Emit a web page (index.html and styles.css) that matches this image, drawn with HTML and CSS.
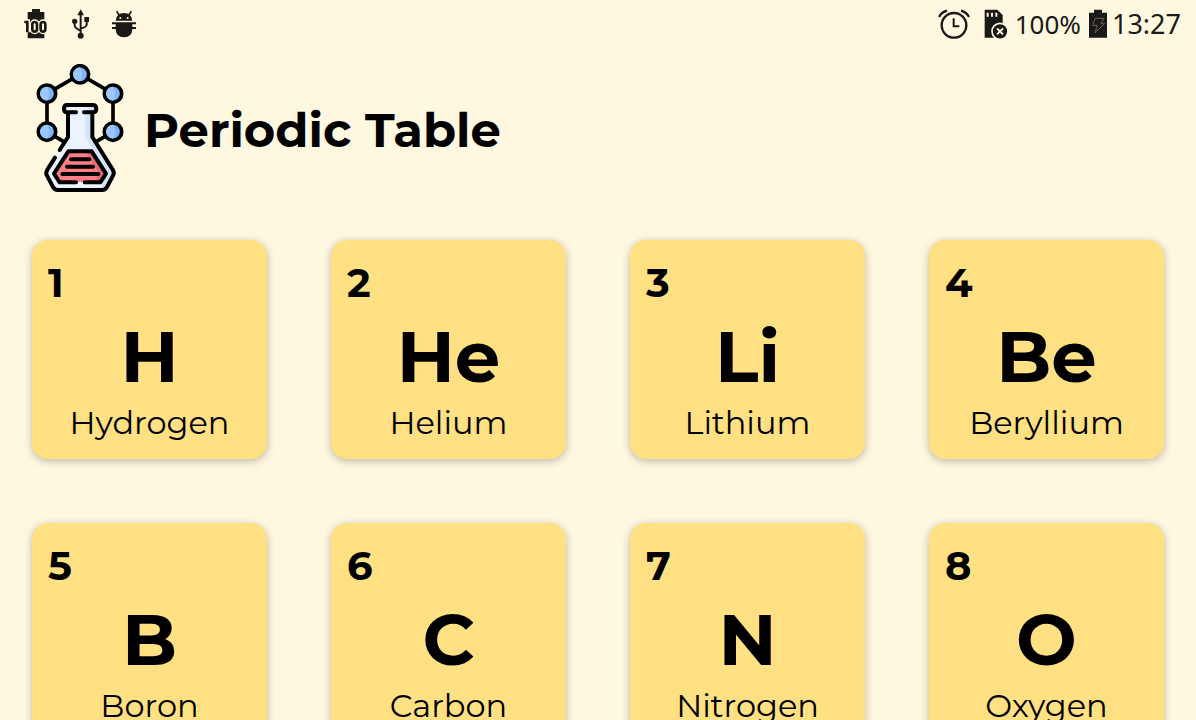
FILE: index.html
```
<!DOCTYPE html>
<html lang="en">
<head>
<meta charset="utf-8">
<meta name="viewport" content="width=device-width, initial-scale=1">
<title>Periodic Table</title>
<link rel="stylesheet" href="styles.css">
</head>
<body>
<div class="status">
  <div class="status-left">
    <svg width="24" height="30" viewBox="0 0 72 90" aria-label="Battery full">
      <path fill="#1a1916" d="M24 0h24v9h13v79H11V9h13z"/>
      <g fill="#fff8e1" stroke="#fff8e1" stroke-width="16"><path d="M1 39h9v31" fill="none"/><rect x="25" y="39" width="14" height="29" rx="7"/><rect x="50" y="39" width="14" height="29" rx="7"/></g>
      <g fill="none" stroke="#1a1916" stroke-width="8"><path d="M1 39h9v31"/><rect x="25" y="39" width="14" height="29" rx="7"/><rect x="50" y="39" width="14" height="29" rx="7"/></g>
    </svg>
    <svg class="usb" width="18" height="30" viewBox="0 0 54 90" aria-label="USB">
      <g fill="none" stroke="#1a1916" stroke-width="6"><path d="M26 12v68M8 38v12q0 5 18 16M44 34v13q0 6-18 12"/></g>
      <path fill="#1a1916" d="M26 1l10 18H16zM37 24h14v15H37z"/><circle cx="8" cy="37" r="8" fill="#1a1916"/><circle cx="26" cy="80" r="9" fill="#1a1916"/>
    </svg>
    <svg width="24" height="30" viewBox="0 0 72 90" aria-label="Debugging">
      <path d="M14 7l9 13M58 7l-9 13" stroke="#1a1916" stroke-width="5"/>
      <path d="M11 35q2-23 25-23t25 23zM0 40h72v6H61v8h11v6H61q-1 25-25 25T11 60H0v-6h11v-8H0z" fill="#1a1916"/>
      <circle cx="25" cy="27" r="3" fill="#fff8e1"/><circle cx="47" cy="27" r="3" fill="#fff8e1"/>
    </svg>
  </div>
  <div class="status-right">
    <svg class="alarm" width="32" height="30" viewBox="0 0 96 90" aria-label="Alarm">
      <g fill="none" stroke="#1a1916" stroke-width="7"><circle cx="48" cy="49" r="37"/><path d="M47 28v24h17" stroke-width="6"/><path d="M3 24Q10 10 27 5M69 5Q86 10 93 24"/></g>
    </svg>
    <svg class="card-icon" width="24" height="30" viewBox="0 0 72 90" aria-label="Memory card removed">
      <path fill="#1a1916" d="M2 2h38l16 16v68H2z"/>
      <path fill="#fff8e1" d="M8 11h6v12H8zM21 11h6v12h-6zM34 11h6v12h-6z"/>
      <circle cx="48" cy="67" r="24" fill="#1a1916" stroke="#fff8e1" stroke-width="5"/>
      <path d="M39 58l18 18M57 58L39 76" stroke="#fff8e1" stroke-width="6"/>
    </svg>
    <span class="percent">100%</span>
    <svg class="battery" width="18" height="30" viewBox="0 0 54 90" aria-label="Charging">
      <path fill="#1a1916" d="M15 2h24v9h15v75H0V11h15z"/>
      <path d="M18 28h27l-9 16h11L18 71l7-22H11z" fill="none" stroke="#66635b" stroke-width="3"/>
    </svg>
    <span class="clock">13:27</span>
  </div>
</div>
<header class="header">
  <svg class="logo" viewBox="36 27 288 384" aria-hidden="true">
    <path d="M135 262L81 230V116L180 58L279 116V230L225 262" fill="none" stroke="#000" stroke-width="11"/>
    <g stroke="#000" stroke-width="11" fill="#7fb3fa">
      <circle cx="180" cy="58" r="26"/><circle cx="81" cy="116" r="26"/><circle cx="279" cy="116" r="26"/><circle cx="81" cy="230" r="26"/><circle cx="279" cy="230" r="26"/>
    </g>
    <g fill="#9cc8ff"><path d="M180 37a21 21 0 0 0 0 42q14-21 0-42zM81 95a21 21 0 0 0 0 42q14-21 0-42zM279 95a21 21 0 0 0 0 42q14-21 0-42zM81 209a21 21 0 0 0 0 42q14-21 0-42zM279 209a21 21 0 0 0 0 42q14-21 0-42z"/></g>
    <path d="M144 172V246L78 354L101 405H258L282 354L217 246V172L226 168V153L218 150H141L132 155V168Z" fill="#ebf3fe"/>
    <path d="M196 174V246L260 353L241 404H258L282 354L217 246V172L226 168V153L218 150H202V172Z" fill="#d3e5fb"/>
    <path d="M145 289H215L258 356L241 381H119L102 356Z" fill="#fb7f85"/>
    <path d="M195 289H215L258 356L241 381H222L239 356Z" fill="#e56a73"/>
    <g fill="none" stroke="#000" stroke-width="12" stroke-linecap="round" stroke-linejoin="round">
      <path d="M168 172H141Q132 172 132 161T141 150H218Q229 150 229 161T218 172H192M144 174V246L119 285M217 174V246L278 344Q284 354 279 362L261 396Q256 405 247 405H113Q104 405 99 396L81 362Q76 354 82 344L105 308"/>
      <path d="M168 382H119L102 356L145 289H215L258 356L241 382H194M153 313H208M141 335H219M127 357H235"/>
    </g>
  </svg>
  <h1 class="title">Periodic Table</h1>
</header>
<main class="elements">
  <button class="element" type="button"><span class="number">1</span><span class="symbol">H</span><span class="name">Hydrogen</span></button>
  <button class="element" type="button"><span class="number">2</span><span class="symbol">He</span><span class="name">Helium</span></button>
  <button class="element" type="button"><span class="number">3</span><span class="symbol">Li</span><span class="name">Lithium</span></button>
  <button class="element" type="button"><span class="number">4</span><span class="symbol">Be</span><span class="name">Beryllium</span></button>
  <button class="element" type="button"><span class="number">5</span><span class="symbol">B</span><span class="name">Boron</span></button>
  <button class="element" type="button"><span class="number">6</span><span class="symbol">C</span><span class="name">Carbon</span></button>
  <button class="element" type="button"><span class="number">7</span><span class="symbol">N</span><span class="name">Nitrogen</span></button>
  <button class="element" type="button"><span class="number">8</span><span class="symbol">O</span><span class="name">Oxygen</span></button>
</main>
</body>
</html>
```
FILE: styles.css
```
* { box-sizing: border-box; }
body {
  margin: 0;
  height: 100vh;
  overflow: hidden;
  background: #fff8e1;
  color: #000;
  font-family: Montserrat, Inter, sans-serif;
}
svg { display: block; flex: none; }
.status {
  display: flex;
  justify-content: space-between;
  align-items: center;
  height: 48px;
  padding: 0 15px 0 24px;
  color: #1a1916;
  font-family: "Noto Sans", sans-serif;
}
.status-left, .status-right { display: flex; align-items: center; }
.usb { margin: 0 22px 0 24px; }
.alarm { margin-right: 14px; }
.card-icon { margin-right: 7px; }
.battery { margin: 0 5px 0 8px; }
.percent { font-size: 26px; line-height: 48px; }
.clock { font-size: 27px; line-height: 48px; }
.header {
  display: flex;
  align-items: center;
  gap: 16px;
  padding: 16px 32px 48px;
}
.logo { width: 96px; height: 128px; }
.title { margin: 0; padding-top: 4px; font-size: 48px; line-height: 60px; font-weight: 700; }
.elements {
  display: grid;
  grid-template-columns: repeat(4, 1fr);
  gap: 64px;
  padding: 0 32px 32px;
}
.element {
  display: flex;
  flex-direction: column;
  align-items: center;
  min-width: 0;
  padding: 20px 16px;
  border: 0;
  border-radius: 16px;
  background: #ffe082;
  box-shadow: 0 2px 8px rgba(0, 0, 0, 0.27);
  color: #000;
  font-family: inherit;
  cursor: pointer;
}
.number { align-self: flex-start; font-size: 40px; line-height: 46px; font-weight: 700; }
.symbol { font-size: 72px; line-height: 100px; font-weight: 700; }
.name { font-size: 32px; line-height: 33px; font-weight: 400; }
```
